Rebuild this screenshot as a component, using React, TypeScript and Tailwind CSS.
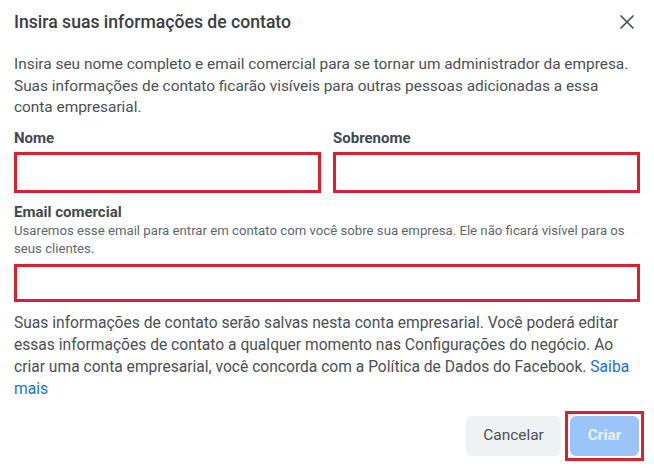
import React from "react";

export default function App() {
  return (
    <div className="w-[654px] h-[468px] bg-white overflow-hidden font-['Roboto',_'Liberation_Sans',_sans-serif] text-[#4b4f56]">
      <div className="flex items-center justify-between pl-[14px] pr-[19px] h-[44px]">
        <h1 className="text-[17.6px] font-medium text-[#3a3d42] leading-[22px]">
          Insira suas informações de contato
        </h1>
        <svg width="16" height="16" viewBox="0 0 16 16" className="text-[#4b4f56]">
          <path d="M2 2 L14 14 M14 2 L2 14" stroke="currentColor" strokeWidth="1.7" strokeLinecap="round" />
        </svg>
      </div>
      <div className="px-[14px]">
        <p className="text-[15.4px] leading-[21.5px] mt-[10px] text-[#4b4f56]">
          Insira seu nome completo e email comercial para se tornar um administrador da empresa.
          Suas informações de contato ficarão visíveis para outras pessoas adicionadas a essa conta empresarial.
        </p>
        <div className="flex gap-[12px] mt-[10px]">
          <div className="flex-1">
            <div className="text-[15px] font-bold text-[#444950] leading-[18px]">Nome</div>
            <div className="mt-[5px] h-[41px] border-[3px] border-[#d8222f] bg-white"></div>
          </div>
          <div className="flex-1">
            <div className="text-[15px] font-bold text-[#444950] leading-[18px]">Sobrenome</div>
            <div className="mt-[5px] h-[41px] border-[3px] border-[#d8222f] bg-white"></div>
          </div>
        </div>
        <div className="mt-[10px] text-[15px] font-bold text-[#444950] leading-[19px]">Email comercial</div>
        <p className="text-[13.2px] leading-[18px] text-[#606770]">
          Usaremos esse email para entrar em contato com você sobre sua empresa. Ele não ficará visível para os seus clientes.
        </p>
        <div className="mt-[6px] h-[38px] border-[3px] border-[#d8222f] bg-white"></div>
        <p className="text-[15.6px] leading-[22px] mt-[10px] text-[#4b4f56] pr-[4px]">
          Suas informações de contato serão salvas nesta conta empresarial. Você poderá editar essas informações de contato a qualquer momento nas Configurações do negócio. Ao criar uma conta empresarial, você concorda com a Política de Dados do Facebook.{" "}
          <a className="text-[#216fdb]">Saiba mais</a>
        </p>
        <div className="flex justify-end items-center mt-[11px] mr-[-4px] gap-[4px]">
          <button className="h-[40px] w-[95px] rounded-[6px] bg-[#f0f1f2] text-[15.4px] text-[#4b4f56]">
            Cancelar
          </button>
          <div className="border-[3px] border-[#d8222f] p-[2px]">
            <button className="h-[40px] w-[69px] rounded-[6px] bg-[#9bc4f8] text-[15.4px] font-bold text-[#e6f0fd]">
              Criar
            </button>
          </div>
        </div>
      </div>
    </div>
  );
}
